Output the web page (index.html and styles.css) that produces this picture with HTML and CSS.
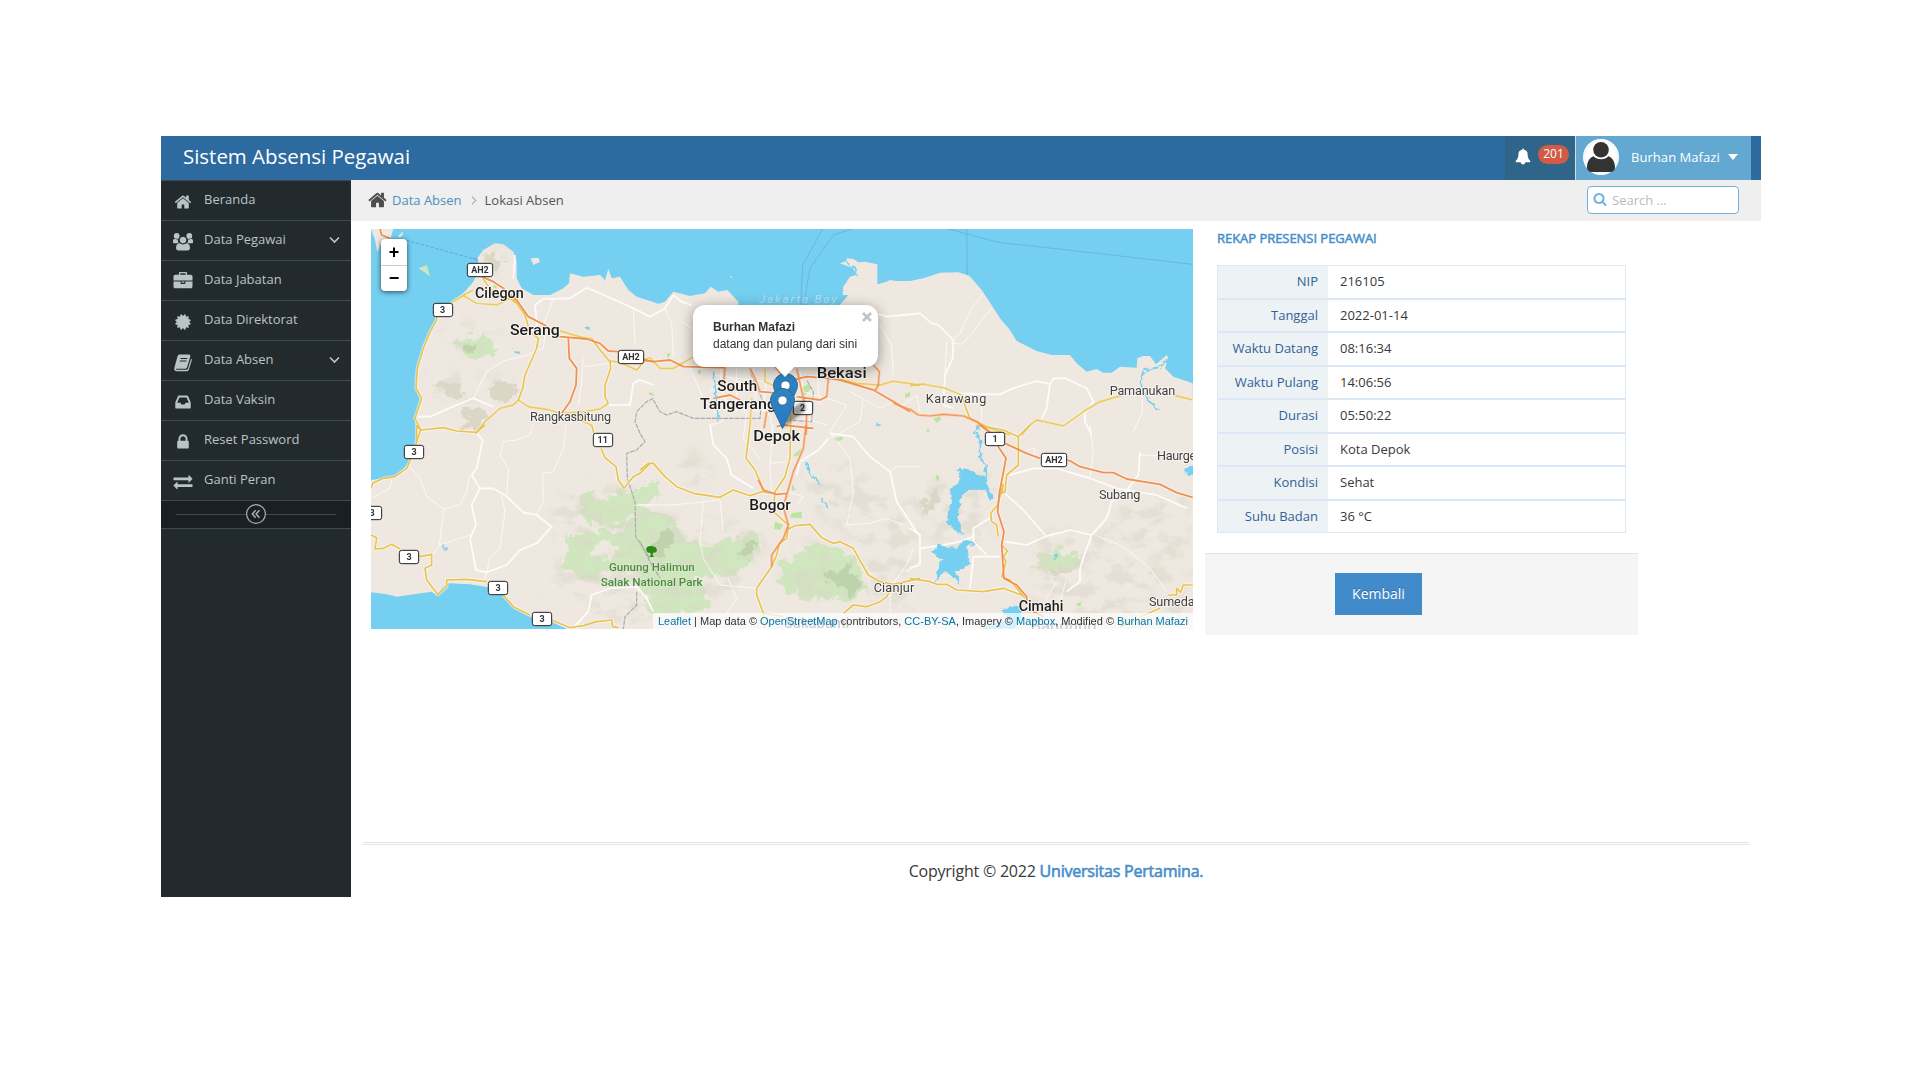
FILE: index.html
```html
<!DOCTYPE html>
<html lang="id">
<head>
<meta charset="utf-8">
<title>Sistem Absensi Pegawai</title>
<link rel="stylesheet" href="styles.css">
</head>
<body>
<div class="app">
  <header class="navbar">
    <a class="brand">Sistem Absensi Pegawai</a>
    <div class="notif">
      <svg class="bell" viewBox="0 0 1792 1792"><path d="M1728 1408q0 52-38 90t-90 38h-448q0 106-75 181t-181 75-181-75-75-181h-448q-52 0-90-38t-38-90q50-42 91-88t85-119.500 74.500-158.500 50-206 19.500-260q0-152 117-282.500t307-158.500q-8-19-8-39 0-40 28-68t68-28 68 28 28 68q0 20-8 39 190 28 307 158.500t117 282.500q0 139 19.500 260t50 206 74.500 158.500 85 119.500 91 88z"/></svg>
      <span class="badge">201</span>
    </div>
    <div class="user">
      <svg class="avatar" viewBox="0 0 36 36"><circle cx="18" cy="18" r="18" fill="#fff"/><circle cx="18" cy="18" r="16.300" fill="none" stroke="#dceaf3" stroke-width=".6"/><circle cx="18" cy="10.800" r="7.800" fill="#333"/><path d="M10.500 17.300C6 19 4 23.500 4 28.500c0 2.500 2 4.500 4.500 4.500h19c2.500 0 4.500-2 4.500-4.500 0-5-2-9.500-6.500-11.200-2 2-4.500 3-7.500 3s-5.500-1-7.500-3z" fill="#333"/></svg>
      <span class="user-name">Burhan Mafazi</span>
      <i class="caret"></i>
    </div>
  </header>

  <div class="body">
    <nav class="sidebar">
      <ul class="menu">
        <li><svg class="ico" viewBox="0 0 1792 1792"><use href="#home"/></svg><span>Beranda</span></li>
        <li><svg class="ico wide" viewBox="0 0 20 18"><circle cx="3.700" cy="3.400" r="2.900"/><circle cx="16.300" cy="3.400" r="2.900"/><path d="M0 10.500V8.200C0 6.600 1.300 6.300 2.200 6.600c1 .5 2 .5 3 .2C4.500 8.300 5 9.700 5.800 10.700H.8zM20 10.500V8.200c0-1.600-1.300-1.900-2.200-1.600-1 .5-2 .5-3 .2.700 1.500.2 2.900-.6 3.900h5zM10 4.200a3.300 3.300 0 1 0 .01 0zM6.300 10.800C4 11 3 13 3 15.500 3 17 4 18 5.500 18h9c1.500 0 2.500-1 2.500-2.500 0-2.500-1-4.500-3.300-4.700-2.200 1.500-5.200 1.500-7.400 0z"/></svg><span>Data Pegawai</span><svg class="arrow" viewBox="0 0 11 8"><path d="M1 1.500l4.500 4.500L10 1.500"/></svg></li>
        <li><svg class="ico wide" viewBox="0 0 1792 1792"><path d="M640 256h512v-128h-512v128zm1152 640v480q0 66-47 113t-113 47h-1472q-66 0-113-47t-47-113v-480h672v160q0 26 19 45t45 19h320q26 0 45-19t19-45v-160h672zm-768 0v128h-256v-128h256zm768-480v384h-1792v-384q0-66 47-113t113-47h352v-160q0-40 28-68t68-28h576q40 0 68 28t28 68v160h352q66 0 113 47t47 113z"/></svg><span>Data Jabatan</span></li>
        <li><svg class="ico" viewBox="0 0 1792 1792"><path d="M1504 896l138 135q30 28 20 70-12 41-52 51l-188 48 53 186q12 41-19 70-29 31-70 19l-186-53-48 188q-10 40-51 52-12 2-19 2-31 0-51-22l-135-138-135 138q-28 30-70 20-41-11-51-52l-48-188-186 53q-41 12-70-19-31-29-19-70l53-186-188-48q-40-10-52-51-10-42 20-70l138-135-138-135q-30-28-20-70 12-41 52-51l188-48-53-186q-12-41 19-70 29-31 70-19l186 53 48-188q10-41 51-51 41-12 70 19l135 139 135-139q29-30 70-19 41 10 51 51l48 188 186-53q41-12 70 19 31 29 19 70l-53 186 188 48q40 10 52 51 10 42-20 70z"/></svg><span>Data Direktorat</span></li>
        <li><svg class="ico" viewBox="0 0 18 18"><path fill-rule="evenodd" d="M5.500 1.500h9.300c1.300 0 1.900 1 1.500 2.100l-3.200 10.600c-.3.900-1 1.500-2 1.500H2.600c-.7 0-1 .9-.1 1h10c.8 0 1.300-.4 1.500-1.100l3-9.900c.7.300 1 .9.700 1.700l-2.800 9.200c-.3.900-1.200 1.600-2.200 1.600H2.500C1 18.200-.2 16.500.3 15L3.500 3.500c.3-1.200 1-2 2-2zM6.600 5l-.3 1h6.800l.3-1zM5.800 7.600l-.3 1h6.800l.3-1z"/></svg><span>Data Absen</span><svg class="arrow" viewBox="0 0 11 8"><path d="M1 1.500l4.500 4.500L10 1.500"/></svg></li>
        <li><svg class="ico" viewBox="0 0 1792 1792"><path d="M1151 960h316q-1-3-2.500-8t-2.500-8l-212-496h-708l-212 496q-1 2-2.500 8t-2.500 8h316l95 192h320zm513 30v482q0 26-19 45t-45 19h-1408q-26 0-45-19t-19-45v-482q0-62 25-123l238-552q10-25 36.500-42t52.500-17h832q26 0 52.500 17t36.500 42l238 552q25 61 25 123z"/></svg><span>Data Vaksin</span></li>
        <li><svg class="ico" viewBox="0 0 1792 1792"><path d="M640 768h512v-192q0-106-75-181t-181-75-181 75-75 181v192zm832 96v576q0 40-28 68t-68 28h-960q-40 0-68-28t-28-68v-576q0-40 28-68t68-28h32v-192q0-184 132-316t316-132 316 132 132 316v192h32q40 0 68 28t28 68z"/></svg><span>Reset Password</span></li>
        <li><svg class="ico wide" viewBox="0 0 1792 1792"><path d="M1792 1184v192q0 13-9.500 22.500t-22.500 9.500h-1376v192q0 13-9.500 22.500t-22.500 9.500q-12 0-24-10l-319-320q-9-9-9-22 0-14 9-23l320-320q9-9 23-9 13 0 22.500 9.500t9.500 22.500v192h1376q13 0 22.500 9.500t9.500 22.500zm0-544q0 14-9 23l-320 320q-9 9-23 9-13 0-22.500-9.500t-9.500-22.500v-192h-1376q-13 0-22.500-9.500t-9.500-22.500v-192q0-13 9.500-22.500t22.500-9.500h1376v-192q0-14 9-23t23-9q12 0 24 10l319 319q9 9 9 23z"/></svg><span>Ganti Peran</span></li>
      </ul>
      <div class="collapse"><svg viewBox="0 0 20 20"><circle cx="10" cy="10" r="9.400" fill="#1a1f23" stroke="#aab0b3" stroke-width="1.200"/><path d="M9.700 6.200L6.300 9.900l3.400 3.800M13.500 6.200l-3.400 3.700 3.400 3.800" fill="none" stroke="#aab0b3" stroke-width="1.500"/></svg></div>
    </nav>

    <main class="main">
      <div class="crumbs">
        <svg class="crumb-home" viewBox="0 0 1792 1792"><path id="home" d="M1472 992v480q0 26-19 45t-45 19h-384v-384h-256v384h-384q-26 0-45-19t-19-45v-480q0-1 .5-3t.5-3l575-474 575 474q1 2 1 6zm223-69l-62 74q-8 9-21 11h-3q-13 0-21-7l-692-577-692 577q-12 8-24 7-13-2-21-11l-62-74q-8-10-7-23.500t11-21.500l719-599q32-26 76-26t76 26l244 204v-195q0-14 9-23t23-9h192q14 0 23 9t9 23v408l219 182q10 8 11 21.500t-7 23.500z"/></svg>
        <a>Data Absen</a>
        <svg class="crumb-sep" viewBox="0 0 6 9"><path d="M1 .8l3.700 3.700L1 8.200"/></svg>
        <span>Lokasi Absen</span>
        <label class="search"><svg viewBox="0 0 1792 1792"><path d="M1216 832q0-185-131.500-316.500t-316.500-131.500-316.500 131.500-131.500 316.500 131.500 316.500 316.500 131.500 316.500-131.500 131.500-316.500zm512 832q0 52-38 90t-90 38q-54 0-90-38l-343-342q-179 124-399 124-143 0-273.500-55.500t-225-150-150-225-55.500-273.500 55.500-273.500 150-225 225-150 273.500-55.500 273.500 55.500 225 150 150 225 55.500 273.500q0 220-124 399l343 343q37 37 37 90z"/></svg><span>Search ...</span></label>
      </div>

      <div class="content">
        <div class="map">
          <svg class="tiles" viewBox="3 12 2466 1200">
            <defs>
              <filter id="rough" x="-10%" y="-10%" width="120%" height="120%"><feTurbulence type="fractalNoise" baseFrequency=".03" numOctaves="4" seed="4"/><feDisplacementMap in="SourceGraphic" scale="62" xChannelSelector="R" yChannelSelector="G"/></filter>
              <filter id="ragged" x="-10%" y="-10%" width="120%" height="120%"><feTurbulence type="fractalNoise" baseFrequency=".06" numOctaves="2" seed="9"/><feDisplacementMap in="SourceGraphic" scale="20" xChannelSelector="R" yChannelSelector="G"/></filter>
              <filter id="relief" x="-5%" y="-5%" width="110%" height="110%"><feTurbulence type="fractalNoise" baseFrequency=".018 .026" numOctaves="4" seed="12" result="n"/><feColorMatrix in="n" values="0 0 0 0 .70  0 0 0 0 .68  0 0 0 0 .58  5 0 0 0 -2.300" result="t"/><feGaussianBlur in="SourceAlpha" stdDeviation="14" result="b"/><feComposite in="t" in2="b" operator="in"/></filter>
              <g id="yellow">
                <path d="M140 650L152 615L135 580L155 520L138 490L142 430L160 370L180 320L200 285V270M245 232L280 212L320 235L380 240L420 220L440 235L465 270L480 320L505 340L500 370L465 450L458 490L445 525L430 540L390 550L345 590L318 625M280 210L310 195M338 160L360 190L385 210L440 228M445 525L475 545L540 555L570 565L640 560L690 552L715 535L705 515V480L722 430L720 410L690 375L665 340L640 338L570 318M720 408L750 412L800 435L830 400M625 565L640 590L665 600L672 625"/>
                <path transform="translate(810)" d="M10 405L30 398L60 430L100 430L160 395M375 430V470L440 500M600 462L650 475L720 480L760 468L840 480M335 520L330 600M450 560L452 600"/>
                <path transform="translate(1620)" d="M0 482L40 478L100 488L155 510L170 555L180 580L240 610L300 630M335 630L360 600L380 585L460 603L520 560L570 530L640 510M790 510L848 525"/>
                <path transform="translate(0 600)" d="M140 0V50L128 90L110 130L75 155L40 160L8 175L3 190M140 5L155 15L220 8L260 18L320 22L345 0M693 70L705 98L738 125L745 165L762 190L790 155L810 145L840 115M3 330L20 338L15 372L40 370L65 358L90 372M148 395L185 388V420L165 430L170 465L203 508L230 485V465L290 463L350 470M400 510L430 545L480 570M545 585L600 608L640 602L680 590L725 585L728 605L745 608"/>
                <path transform="translate(810 600)" d="M0 135L25 115H40L75 155L110 185L160 205L240 217L280 195L330 212L365 200L400 205M330 0L318 100L345 135L370 195M452 0L450 100L435 155L405 200L400 260L445 300M445 312L465 302L510 298L545 338L580 355L600 350L640 370L665 415L685 450L720 470L760 478L840 460M760 480L740 515L720 530L680 545L640 540L610 565M445 305L440 340L418 355L410 390L395 425L350 490V510L370 565L372 612M372 565L430 575"/>
                <path transform="translate(1620 600)" d="M200 0L280 15L325 35L360 0M325 35V120L290 150L285 200L275 205L280 178L263 240L242 265L245 290L260 300L265 335M275 360L292 378L280 395L288 410L275 455L300 465L345 520M0 460L60 470L80 478L110 478L140 495L220 500L280 490L340 512M848 480H820L812 502L800 490V510L775 510M690 575L750 550"/>
              </g>
              <g id="orange">
                <path d="M30 12L35 30L60 40M335 155L370 170L400 190L440 225L475 275L520 298L570 335L650 342L690 355L715 378L745 380M595 340L598 400L620 430L618 480L600 530L575 565M820 405L850 410"/>
                <path transform="translate(810)" d="M10 405L40 410L90 405L130 425L240 428H255L250 480L300 500M330 430L345 460L360 500L420 505M405 425L440 470L500 455L565 460L600 465L700 495L760 530L810 560M470 430L490 520L500 560L498 630M700 420L718 440L715 480L705 497M565 460L560 515L540 525L470 515M410 605L430 600L520 610M220 520L270 510L300 525M380 560L372 610"/>
                <path transform="translate(1620)" d="M0 552L25 570L60 573L100 568L160 573L200 590L250 630"/>
                <path d="M1570 535L1622 555"/>
                <path transform="translate(810 600)" d="M498 0L490 70L460 140L430 245L445 300L430 340L395 390V425M355 165L370 195L410 208L440 205"/>
                <path transform="translate(1620 600)" d="M210 0L250 30L265 65L288 100L268 205L263 260L282 320L275 360L282 460L320 480L350 515L352 540M285 55L350 85L390 100M472 105L485 110L510 125L580 143H610L650 162L750 178L800 203L848 217M630 605L690 580M370 560L400 575"/>
              </g>
            </defs>
            <rect width="2480" height="1220" fill="#75cff0"/>
            <path class="land" d="M3 765L80 755L118 712L138 650L138 610L135 580L150 525L138 490L142 430L160 360L190 310L200 270L245 230L280 205L310 170L330 130L322 100L340 75L375 55L400 58L430 80L440 110V160L455 190L490 210H540L580 190L597 175L600 145L640 155L690 150L705 165L692 210L715 132L725 160L750 155L775 195L800 215L840 228L865 236L885 230L910 200L960 213L1005 205L1022 185L1045 200L1072 195L1105 230V280H1380L1410 240L1435 210H1418L1420 185L1440 155L1458 150L1450 130L1410 115L1430 108L1430 100L1450 102L1465 112L1485 110L1522 118V178L1550 170L1560 165L1580 168L1620 168L1660 160L1710 143L1765 142L1798 152L1835 195L1870 248L1890 280L1920 315L1940 348L2000 378L2045 390H2100L2120 415L2150 440L2180 432L2200 443H2225L2250 425L2300 428L2302 400L2320 393H2340L2358 418L2390 390L2395 400L2385 430L2410 455L2468 475L2480 1220H610L545 1190L480 1175L430 1148L400 1110L355 1087L300 1078L235 1075L215 1090L200 1110L185 1100L80 1115L50 1108L3 1102Z"/>
            <path class="land" d="M3 12H70L62 38L35 50L22 82L15 45ZM85 32L98 20V30L88 38ZM482 100L505 98L510 110L490 120ZM1082 153h4v5h-4z"/>
            <path fill="#cfe6bd" d="M145 130L170 120L175 135L180 155L168 145Z"/>
            <g class="hill" filter="url(#rough)">
              <path d="M350 490L385 465L440 490L430 520L385 530ZM275 575L310 545L350 570L330 605L290 610ZM190 490L230 470L290 500L280 520L230 510ZM340 100L375 80L400 110L370 130Z"/>
              <path d="M1340 1060L1410 1030L1470 1060L1440 1120L1380 1100ZM1640 850L1710 780L1700 840L1650 880ZM2010 1010L2080 1000L2110 1040L2040 1060Z"/>
            </g>
            <g class="park" filter="url(#rough)">
              <path d="M265 330L295 340L330 330L380 375L375 395L330 395L295 405L265 395L270 375Z"/>
              <path d="M625 820L675 790V840L700 820L760 800L860 770L870 820L800 850V880L730 905L665 900L650 870L625 860Z"/>
              <path fill-rule="evenodd" d="M600 930L660 918L730 920L800 890V840L880 865L920 900L950 950L1010 965L1080 940L1150 915L1175 950L1165 990L1120 1030L1080 1060L1020 1040L970 1070L1010 1100L1025 1135L1000 1160L920 1170L840 1160L810 1050L730 1030L700 1050L650 1070L610 1050L580 1015ZM675 950L670 985L710 1000L750 980L720 935Z"/>
              <path d="M1215 1075L1240 1030L1225 1010L1260 1010L1300 970L1350 950L1420 975L1465 1010L1485 1050L1475 1105L1420 1135L1360 1120L1320 1130L1260 1105Z"/>
              <path d="M1992 1018L2025 980L2060 962L2085 975L2090 1000L2115 970L2125 1020L2120 1040L2070 1020L2040 1045Z"/>
            </g>
            <g class="shade" filter="url(#relief)">
              <path d="M330 100L360 65L410 70L430 130L370 150ZM220 290L290 280L380 340L370 400L260 400L210 320ZM370 300L410 270L390 340ZM150 450L250 440L310 410L340 470L290 540L180 520ZM330 490L380 440L440 480L430 530L360 540ZM260 570L310 530L370 580L330 630L270 620Z"/>
              <path d="M540 830L640 770L800 780L840 900L830 1200H620L660 1120L480 1110L560 1010Z"/>
              <path d="M880 700L980 670L1040 720L1000 790L890 770ZM820 850L1160 900L1200 960L1100 1100L830 1200ZM1200 1000L1340 930L1480 990L1500 1120L1280 1130ZM1290 740L1440 700L1520 800L1640 840L1640 1200L1500 1180L1440 940L1330 860Z"/>
              <path d="M1620 830L1720 740L1850 740L1890 800L1860 960L1750 970L1620 920ZM1970 930L2120 900L2400 880L2468 960V1212H1970L1800 1180L1880 1140L1990 1140ZM2200 820L2460 800V940L2300 920Z"/>
            </g>
            <g class="relief-dark" filter="url(#rough)"><path d="M270 375L300 360L330 350L310 375L280 385ZM1120 960L1170 950L1150 990L1100 1000ZM1360 1060L1430 1020L1470 1060L1450 1110L1400 1080ZM840 970L900 910L910 950L870 1000Z"/></g>
            <path class="spot" d="M370 180l10 2v10l-10-4zM836 505l8-5v10zM890 385l12 0-8 18zM985 435l8 0v12h-10zM1290 490l25-12 10 10-22 25zM835 508l14-4 2 10zM1605 507l15-5 0 12-14 5zM1690 580l20-6 4 10-15 10zM1270 690l25-20-5 20-15 5zM1265 865l30-5 0 20-35-2zM1215 890l25 10-10 15-18-4zM1390 640l28-5 0 10-20 4zM1700 748l8 8-3 14-8-10zM1670 612h8v8h-8zM2120 1135l15-4-3 12h-12zM1265 775l12 20-10 2z"/>
            <g class="street thick">
              <path d="M505 340L495 240L520 222L600 220L650 188L690 205L790 250L840 275L885 250L910 210L935 230L965 240M145 575H180L260 540L310 520L370 545M715 540L780 540L790 475L810 465L850 480M435 90L430 160M1510 262L1550 275L1650 265L1685 295L1705 300L1750 345L1748 400L1725 450L1720 540L1750 550M1770 505L1890 508L1930 490L2000 468L2040 478L2050 460H2085L2150 490L2170 530L2145 565V590L2165 630M2040 478L2030 550L2015 580"/>
              <path d="M320 625L338 645L320 730L305 750L330 790H370L410 815L460 862L500 870L545 905L500 955L450 975L410 1020L350 1042L318 1035L300 940L318 900L305 840L330 790M610 1208L655 1160L665 1110L720 1090L800 1085L830 1120L850 1160"/>
              <path d="M1020 600L1030 660L1070 700L1085 750L1150 790M1380 625L1450 635L1500 695L1560 740L1580 830L1650 935M1375 640L1345 675L1290 710L1280 750M1905 805L1960 855L2025 930M1905 950L1970 960L2025 935L2100 915L2165 930L2210 880L2225 830L2260 810L2305 750L2310 680M1920 750L1990 730H2060L2160 760L2240 790L2360 810L2450 850M2165 930L2150 970L2130 1030V1070L2090 1100M1620 910L1650 930V1020L1620 1030M1650 970L1720 960L1770 950L1810 935M1890 995H1810L1800 1090M1860 880L1810 910V950L1850 990"/>
            </g>
            <g class="street">
              <path d="M550 222L520 300M790 250L795 360M310 520L350 440L400 408L470 390L520 370L525 330M640 400L635 470L625 540M645 425L720 415M885 250L905 295L910 395M935 290L980 320L1015 350M1410 270L1460 280L1530 300L1565 360L1570 450M1865 250L1810 320L1775 358L1750 355M1840 205L1805 250L1770 325L1750 345M2317 500V560L2290 620M1835 510V590M120 725L150 760L170 815L222 852L270 840L290 800L300 750M222 852L208 960L300 930M208 960L190 990M345 1060L360 1000L390 970L405 860L395 815M410 810L415 730L390 690L400 650L440 645L480 630L490 600M500 868L520 830L518 745L550 740L580 670L588 600M790 840H840M3 820L60 790L65 765"/>
              <path d="M1200 715L1250 710M1210 600L1200 720L1205 800M1650 725H1580L1560 740M1560 1080V1160M1430 900L1500 895L1550 880L1600 900M810 840H910L1050 825L1060 920M1000 830L990 950L1000 1000L1050 1080L1160 1090M1630 970L1610 1020L1570 1075M1650 1010L1610 1040M1250 800L1300 815L1280 840M2175 930L2260 965L2340 1030L2390 1100M2160 600L2170 680L2160 760M2305 690L2380 692M1970 675L1995 670L1990 700M2060 1070L2030 1120M2090 1060L2070 1130M1380 640L1470 590L1480 520M1380 620L1440 700L1450 800L1430 900M1600 540L1640 510L1650 560M1075 1060L1100 1120L1060 1180M1730 350L1725 450"/>
              <path d="M1020 500L1080 460L1140 480M1050 420L1060 520L1130 560M1100 430V560M1150 430L1160 540L1200 570M1190 440L1180 560M1030 450L1180 470M1060 490L1190 500M1290 440L1300 500L1370 520M1340 440L1350 540M1300 580L1370 600M1070 530L1170 560L1230 540M1130 560L1120 640L1170 700M1200 570L1210 640M1440 500L1530 550L1570 530M1370 520L1430 540L1380 620M960 430L1000 520L1060 590L1020 600"/>
            </g>
            <path class="ferry" d="M1358 12L1298 120L1292 245M1445 12L1390 30L1320 130L1300 245M1735 12L1885 52L2120 78L2468 118M1790 12L1792 150"/>
            <path class="ferry dash" d="M110 46L320 104M308 100h13v10"/>
            <path class="border" d="M850 520L830 530L800 560L795 590L810 625L825 650L800 675L770 685L772 760L795 830L797 935L840 1000M800 1100V1140L765 1175L760 1212M850 525L870 560L890 570L920 560L970 580H1170L1175 520L1140 440M1230 560L1250 585L1325 590L1330 500L1310 465M810 950L840 1010L870 1060"/>
            <use href="#yellow" class="casing"/><use href="#orange" class="casing"/>
            <use href="#yellow" class="road-y"/><use href="#orange" class="road-o"/>
            <g fill="#75cff0" filter="url(#ragged)">
              <path transform="translate(1624 604)" d="M135 130L160 125L225 155L232 185L247 215L235 220L225 195L180 185L150 210L140 280L155 325L135 315L110 290L108 265L122 230L115 185L135 175L150 155ZM62 370L90 355L110 365L140 360L160 340L197 350L165 360L170 400L180 410L160 425L130 435L150 475L120 450L100 430L70 470L85 420L90 400L65 375ZM265 550L330 535L335 575L300 612H190L240 595L290 575ZM820 122H860V148L822 142Z"/>
              <path d="M432 372L452 380L445 390L435 385ZM645 303H658V314H645ZM215 962L235 968L222 978ZM1518 595L1535 600L1520 606ZM2048 990l12-6-5 20z"/>
            </g>
            <path class="river" filter="url(#ragged)" d="M2395 395L2375 425L2320 437L2310 470L2325 510L2342 530L2365 555M1820 605L1815 625L1832 645L1830 695L1848 725L1850 770M1820 600L1828 615M1310 715L1318 740L1350 780M1355 820L1375 850M1030 440L1040 520L1045 590M1430 112L1455 125L1462 150"/>
            <g class="town">
              <text class="sea" x="1168" y="235" textLength="232">Jakarta Bay</text>
              <text x="315" y="219" textLength="146" lengthAdjust="spacingAndGlyphs">Cilegon</text>
              <text x="420" y="330" textLength="149" lengthAdjust="spacingAndGlyphs">Serang</text>
              <text x="1042" y="499" textLength="120" lengthAdjust="spacingAndGlyphs">South</text>
              <text x="990" y="553" textLength="228" lengthAdjust="spacingAndGlyphs">Tangerang</text>
              <text x="1340" y="459" textLength="150" lengthAdjust="spacingAndGlyphs">Bekasi</text>
              <text x="1150" y="648" textLength="140" lengthAdjust="spacingAndGlyphs">Depok</text>
              <text x="1138" y="856" textLength="124" lengthAdjust="spacingAndGlyphs">Bogor</text>
              <text x="1946" y="1159" textLength="134" lengthAdjust="spacingAndGlyphs">Cimahi</text>
              <text x="1242" y="1210" textLength="196" lengthAdjust="spacingAndGlyphs" class="faint">Sukabumi</text>
              <text x="1982" y="1218" textLength="198" lengthAdjust="spacingAndGlyphs" class="faint">Bandung</text>
            </g>
            <g class="small-town">
              <text x="480" y="587" textLength="243">Rangkasbitung</text>
              <text x="1667" y="534" textLength="182">Karawang</text>
              <text x="2219" y="510" textLength="197">Pamanukan</text>
              <text x="2361" y="704" textLength="172">Haurgeulis</text>
              <text x="2187" y="823" textLength="124">Subang</text>
              <text x="1511" y="1101" textLength="122">Cianjur</text>
              <text x="2337" y="1142" textLength="178">Sumedang</text>
            </g>
            <g class="park-name"><text x="717" y="1038" textLength="257" lengthAdjust="spacingAndGlyphs">Gunung Halimun</text><text x="692" y="1082" textLength="306" lengthAdjust="spacingAndGlyphs">Salak National Park</text></g>
            <path fill="#2c8a14" d="M829 975c-2-9 6-12 12-12 9 0 19 3 19 10 3 8-6 12-11 10l-1 8 5 5h-15l4-5-1-8c-5 2-11-1-12-8z"/>
            <g class="shield">
              <g><rect x="292" y="115" width="76" height="40" rx="7"/><text x="330" y="144">AH2</text></g>
              <g><rect x="190" y="235" width="58" height="40" rx="7"/><text x="218" y="264">3</text></g>
              <g><rect x="745" y="376" width="76" height="40" rx="7"/><text x="783" y="405">AH2</text></g>
              <g><rect x="1270" y="529" width="58" height="40" rx="7"/><text x="1298" y="558">2</text></g>
              <g><rect x="670" y="625" width="58" height="40" rx="7"/><text x="698" y="655">11</text></g>
              <g><rect x="103" y="661" width="58" height="40" rx="7"/><text x="132" y="690">3</text></g>
              <g><rect x="-23" y="844" width="58" height="40" rx="7"/><text x="6" y="873">3</text></g>
              <g><rect x="88" y="976" width="58" height="40" rx="7"/><text x="117" y="1004">3</text></g>
              <g><rect x="355" y="1069" width="58" height="40" rx="7"/><text x="384" y="1098">3</text></g>
              <g><rect x="487" y="1162" width="58" height="40" rx="7"/><text x="516" y="1191">3</text></g>
              <g><rect x="1846" y="622" width="58" height="40" rx="7"/><text x="1875" y="651">1</text></g>
              <g><rect x="2014" y="685" width="76" height="40" rx="7"/><text x="2052" y="715">AH2</text></g>
            </g>
          </svg>
          <svg class="pins" viewBox="0 0 60 60">
            <defs>
              <linearGradient id="pin-fill" x1="0" y1="0" x2="0" y2="1"><stop offset="0" stop-color="#2e85bd"/><stop offset="1" stop-color="#2878c8"/></linearGradient>
              <g id="pin"><path fill="url(#pin-fill)" stroke="#2e6c97" d="M12.500.5C5.900.5.500 5.900.5 12.500c0 2.500 1.200 5.200 1.700 6.300L12.500 40.500l10.300-21.700c.5-1.100 1.700-3.800 1.700-6.300C24.500 5.900 19.100.5 12.500.5z"/><circle cx="12.500" cy="12.500" r="4.600" fill="#fff" stroke="#2e6c97" stroke-width=".8"/></g>
              <filter id="soft"><feGaussianBlur stdDeviation="1.500"/></filter>
            </defs>
            <path d="M13 55L36 37l-2-9-14 8z" opacity=".4" filter="url(#soft)"/>
            <use href="#pin" x="3" y="0"/><use href="#pin" x="0" y="15"/>
          </svg>
          <div class="popup"><b>Burhan Mafazi</b><br>datang dan pulang dari sini<svg class="close" viewBox="0 0 10 10"><path d="M1 1l8 8M9 1L1 9"/></svg></div>
          <div class="zoom"><span>+</span><span>−</span></div>
          <div class="attribution"><a>Leaflet</a> | Map data © <a>OpenStreetMap</a> contributors, <a>CC-BY-SA</a>, Imagery © <a>Mapbox</a>, Modified © <a>Burhan Mafazi</a></div>
        </div>

        <section class="recap">
          <h5>REKAP PRESENSI PEGAWAI</h5>
          <dl class="info">
            <div><dt>NIP</dt><dd>216105</dd></div>
            <div><dt>Tanggal</dt><dd>2022-01-14</dd></div>
            <div><dt>Waktu Datang</dt><dd>08:16:34</dd></div>
            <div><dt>Waktu Pulang</dt><dd>14:06:56</dd></div>
            <div><dt>Durasi</dt><dd>05:50:22</dd></div>
            <div><dt>Posisi</dt><dd>Kota Depok</dd></div>
            <div><dt>Kondisi</dt><dd>Sehat</dd></div>
            <div><dt>Suhu Badan</dt><dd>36 °C</dd></div>
          </dl>
          <div class="actions"><a class="btn">Kembali</a></div>
        </section>
      </div>

      <footer class="footer">Copyright © 2022 <b>Universitas Pertamina.</b></footer>
    </main>
  </div>
</div>
</body>
</html>
```

FILE: styles.css
```css
* { box-sizing: border-box; }
body { margin: 0; padding: 136px 159px 0 161px; background: #fff; color: #393939; font: 13px/20px "Open Sans", sans-serif; }
svg { display: block; flex: none; }
.app { width: 1600px; height: 761px; display: flex; flex-direction: column; }

.navbar { height: 44px; background: #2c6aa0; color: #fff; display: flex; padding-right: 10px; flex: none; }
.brand { font-size: 20.450px; line-height: 40px; padding-left: 22px; margin-right: auto; }
.notif { width: 70px; background: #2e6589; display: flex; padding: 9px 0 0 10px; }
.bell { width: 16px; height: 17px; margin-top: 3px; fill: #fff; }
.badge { width: 31px; height: 19px; border-radius: 10px; background: #d15b47; margin-left: 7px; text-align: center; font-size: 12px; line-height: 18px; }
.user { width: 176px; background: #62a8d1; border-left: 1px solid #ddd; display: flex; align-items: center; padding: 0 0 2px 7px; }
.avatar { width: 36px; height: 36px; }
.user-name { margin: 0 8px 0 12px; white-space: nowrap; letter-spacing: .05px; }
.caret { border: 5px solid transparent; border-top: 6px solid #fff; border-bottom: 0; margin-top: -1px; }

.body { display: flex; flex: 1; }
.sidebar { width: 190px; background: #222a2d; color: #bac3c8; flex: none; }
.menu { list-style: none; margin: 0; padding: 0; }
.menu li { height: 40px; border-top: 1px solid #3e4a52; display: flex; align-items: center; padding: 0 11px 3px 12px; }
.menu span { margin-right: auto; padding-left: 11px; }
.ico { width: 20px; height: 18px; margin-top: 5px; fill: #bac3c8; overflow: visible; }
.ico.wide { height: 19px; }
.arrow { width: 11px; height: 8px; margin-top: 2px; fill: none; stroke: #bac3c8; stroke-width: 1.700; }
.collapse { height: 29px; border: solid #3e4a52; border-width: 1px 0; background: linear-gradient(#3e4a52, #3e4a52) 15px 13px / 160px 1px no-repeat #1a1f23; display: flex; justify-content: center; padding-top: 3px; }
.collapse svg { width: 20px; height: 20px; }

.main { flex: 1; display: flex; flex-direction: column; }
.crumbs { height: 41px; background: #efefef; display: flex; align-items: center; padding: 0 22px 2px 16px; color: #555; }
.crumb-home { width: 21px; height: 20px; fill: #4c4c4c; }
.crumbs a { color: #4c8fbd; margin-left: 4px; }
.crumb-sep { width: 6px; height: 9px; margin: 2px 8px 0 9px; fill: none; stroke: #b2b6bf; stroke-width: 1.400; }
.search { width: 152px; height: 28px; margin: 0 0 0 auto; border: 1px solid #6fb3e0; border-radius: 4px; background: #fff; display: flex; align-items: center; padding: 0 5px; color: #bbb; }
.search svg { width: 14px; height: 14px; fill: #6fb3e0; margin: -2px 5px 0 0; }

.content { display: flex; padding: 8px 0 0 20px; }
.map { position: relative; width: 822px; height: 400px; overflow: hidden; background: #75cff0; font: 12px/17px "Liberation Sans", Arial, sans-serif; }
.tiles { width: 822px; height: 400px; font-family: Roboto, sans-serif; }
.land { fill: #efe8e1; }
.hill { fill: #d6d0be; opacity: .75; }
.park { fill: #cfe6bd; opacity: .95; }
.shade { opacity: .5; }
.relief-dark { fill: #a7c294; opacity: .45; }
.spot { fill: #b9e5a0; }
.street { fill: none; stroke: #fff; stroke-width: 3; stroke-linejoin: round; opacity: .7; }
.street.thick { stroke-width: 5; opacity: .9; }
.ferry { fill: none; stroke: #62b2e4; stroke-width: 2.500; }
.ferry.dash { stroke: #5a9fd8; stroke-dasharray: 9 6; }
.border { fill: none; stroke: #a9a9b2; stroke-width: 3.500; stroke-dasharray: 14 3; }
.casing, .road-y, .road-o, .river { fill: none; stroke-linejoin: round; }
.casing { stroke: #fff; stroke-width: 9; opacity: .75; }
.road-y { stroke: #e8c34e; stroke-width: 5; }
.road-o { stroke: #f2914f; stroke-width: 5.500; }
.river { stroke: #75cff0; stroke-width: 5; }
.town text, .small-town text, .park-name text { paint-order: stroke; stroke: #f7f3ee; stroke-width: 6px; stroke-linejoin: round; }
.town { font-size: 43px; font-weight: 500; fill: #1c1c1c; }
.small-town { font-size: 38px; fill: #3f3f42; }
.park-name { font-size: 35px; font-weight: 500; fill: #4e8a43; }
.park-name text { stroke: #dcecd0; stroke-width: 3px; }
.town .sea { font-size: 34px; font-style: italic; font-weight: 400; fill: #b5dff5; stroke: none; }
.town .faint { fill: #666; }
.shield rect { fill: #fff; stroke: #222; stroke-width: 3; }
.shield text { font-size: 27px; font-weight: 700; fill: #333; text-anchor: middle; }

.pins { position: absolute; left: 399px; top: 144px; width: 60px; height: 60px; }
.popup { position: absolute; left: 322px; top: 76px; width: 185px; height: 62px; border-radius: 12px; background: #fff; color: #333; padding: 14px 20px; white-space: nowrap; box-shadow: 0 3px 14px rgba(0, 0, 0, .4); }
.popup::after { content: ""; position: absolute; left: 82px; top: 61px; border: 10.500px solid transparent; border-top: 11px solid #fff; border-bottom: 0; }
.close { position: absolute; right: 6px; top: 7px; width: 10px; height: 10px; stroke: #c3c3c3; stroke-width: 2.600; }
.zoom { position: absolute; left: 10px; top: 10px; width: 26px; height: 52px; border-radius: 4px; background: #fff; box-shadow: 0 1px 5px rgba(0, 0, 0, .65); color: #000; font: bold 18px/26px "Liberation Sans", Arial, sans-serif; text-align: center; }
.zoom span { display: block; height: 26px; }
.zoom span + span { border-top: 1px solid #ccc; line-height: 25px; }
.attribution { position: absolute; right: 0; bottom: 0; height: 16px; padding: 0 5px; background: rgba(255, 255, 255, .7); font-size: 11px; line-height: 16px; white-space: nowrap; color: #333; }
.attribution a { color: #0078a8; }

.recap { width: 433px; margin-left: 12px; }
.recap h5 { margin: 0 12px 16px; font-size: 13px; font-weight: 400; line-height: 19px; height: 20px; letter-spacing: -.04px; color: #478fca; -webkit-text-stroke: .5px #478fca; }
.info { margin: 0 12px 20px; height: 268px; border: 1px solid #dce8f7; display: grid; grid-template-rows: 34px 33px 34px 33px 34px 33px 34px 31px; }
.info div { display: flex; border-bottom: 2px solid #dce8f7; }
.info div:last-child { border: 0; }
.info dt { width: 110px; background: #edf3f4; color: #336199; text-align: right; padding: 5px 10px 0 0; }
.info dd { margin: 0; padding: 5px 0 0 12px; }
.actions { height: 82px; background: #f5f5f5; border-top: 1px solid #e5e5e5; padding: 19px 0 0 130px; }
.btn { display: block; width: 87px; height: 42px; background: #428bca; color: #fff; font-size: 14px; line-height: 41px; text-align: center; text-shadow: 0 -1px 0 rgba(0, 0, 0, .25); }

.footer { margin: auto 12px 0; height: 55px; border-top: 3px double #e5e5e5; text-align: center; font-size: 16px; line-height: 52px; letter-spacing: -.22px; }
.footer b { font-weight: 400; color: #478fca; -webkit-text-stroke: .6px #478fca; }
```
